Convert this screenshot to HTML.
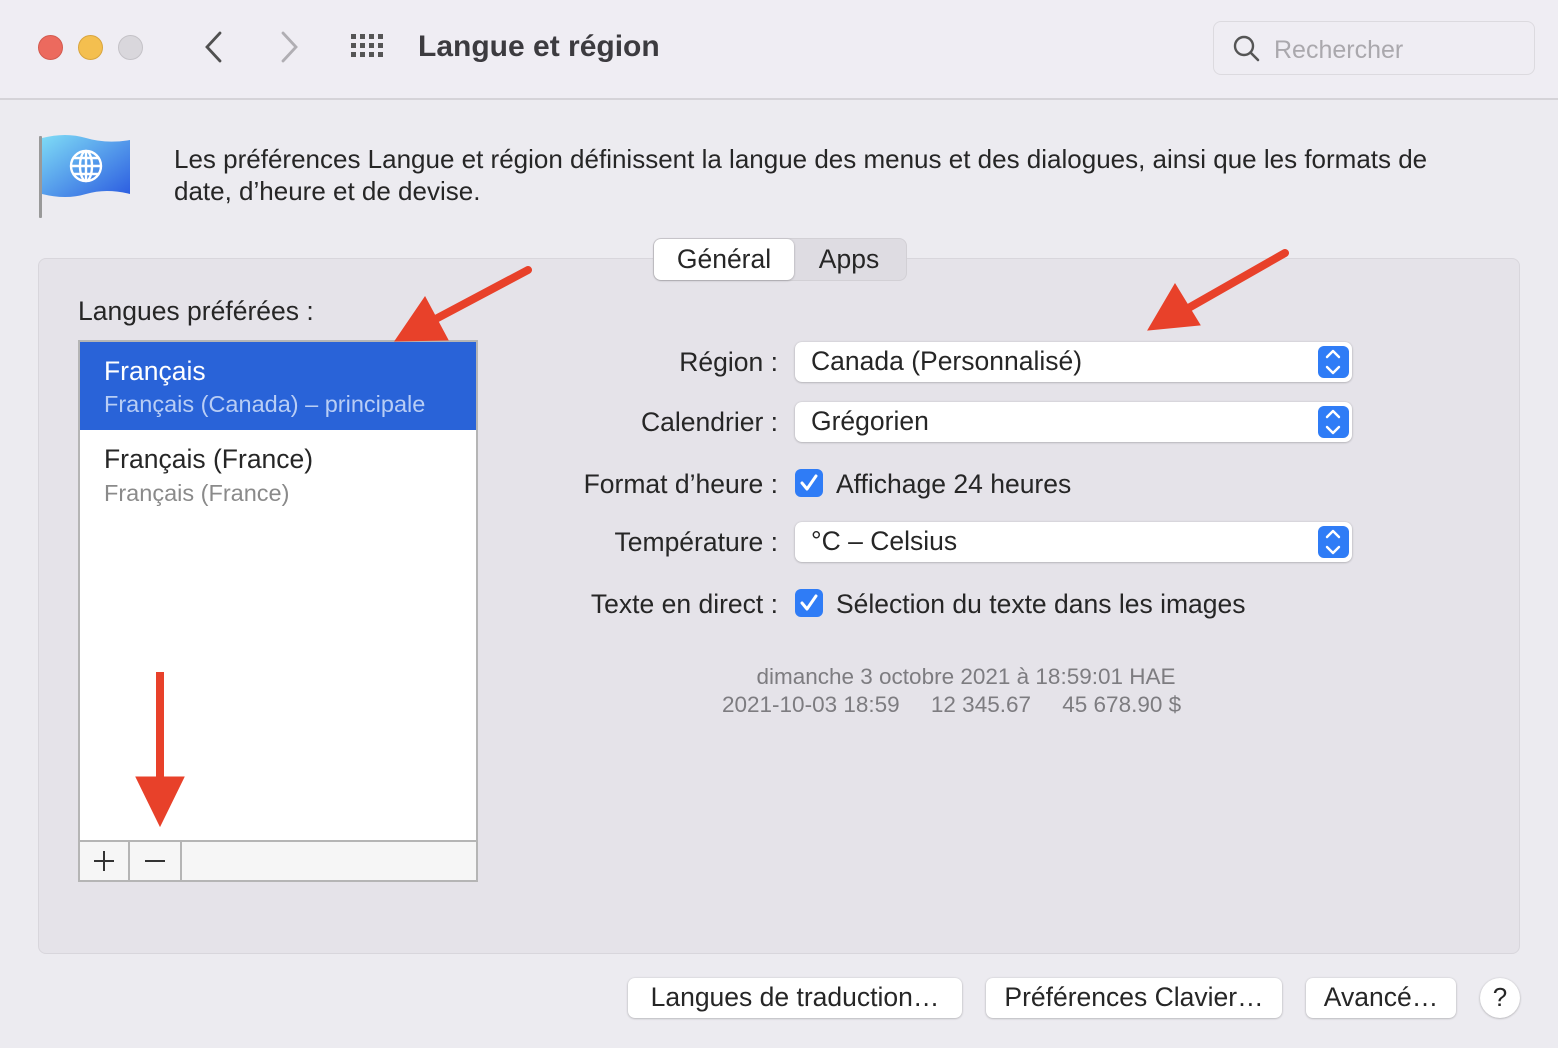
<!DOCTYPE html>
<html><head><meta charset="utf-8"><style>
*{margin:0;padding:0;box-sizing:border-box}
body{width:1558px;height:1048px;background:#ecebf0;font-family:"Liberation Sans",sans-serif;color:#262626;position:relative;overflow:hidden}
.a{position:absolute;white-space:nowrap}
.tb{position:absolute;left:0;top:0;width:1558px;height:100px;background:#efedf3;border-bottom:2px solid #d5d3d8}
.dot{position:absolute;top:35px;width:25px;height:25px;border-radius:50%}
.panel{position:absolute;left:38px;top:258px;width:1482px;height:696px;background:#e5e3e9;border:1px solid #d8d6dc;border-radius:8px}
.pop{position:absolute;left:795px;width:557px;height:40px;background:#fff;border-radius:7px;box-shadow:0 0.5px 2px rgba(0,0,0,.3);font-size:26.5px;padding:4px 0 0 16px}
.pop .s{position:absolute;right:3px;top:4px;width:31px;height:32px;background:#2f7cf6;border-radius:6px}
.lbl{position:absolute;font-size:26.5px;text-align:right;right:780px;white-space:nowrap}
.cb{position:absolute;left:795px;width:28px;height:28px;background:#2f7cf6;border-radius:6px}
.btn{position:absolute;top:978px;height:40px;background:#fff;border-radius:7px;box-shadow:0 0.5px 2px rgba(0,0,0,.3);font-size:26.5px;text-align:center;padding-top:4px}
</style></head><body>
<div class="tb"></div>
<div class="dot" style="left:38px;background:#ec6a5e;border:1px solid #d35a4f"></div>
<div class="dot" style="left:78px;background:#f4bf4f;border:1px solid #d9a53e"></div>
<div class="dot" style="left:118px;background:#d9d7dc;border:1px solid #c4c2c7"></div>
<svg class="a" style="left:200px;top:30px" width="110" height="36"><path d="M20 3 L7 17 L20 31" stroke="#505050" stroke-width="2.8" fill="none" stroke-linecap="round"/><path d="M83 3 L96 17 L83 31" stroke="#b0aeb3" stroke-width="2.8" fill="none" stroke-linecap="round"/></svg>
<svg class="a" style="left:350px;top:33px" width="40" height="30"><g fill="#555"><rect x="1" y="1" width="5" height="5"/><rect x="10" y="1" width="5" height="5"/><rect x="19" y="1" width="5" height="5"/><rect x="28" y="1" width="5" height="5"/><rect x="1" y="10" width="5" height="5"/><rect x="10" y="10" width="5" height="5"/><rect x="19" y="10" width="5" height="5"/><rect x="28" y="10" width="5" height="5"/><rect x="1" y="19" width="5" height="5"/><rect x="10" y="19" width="5" height="5"/><rect x="19" y="19" width="5" height="5"/><rect x="28" y="19" width="5" height="5"/></g></svg>
<div class="a" style="left:418px;top:30px;font-size:30px;font-weight:bold;color:#3c3b3f">Langue et région</div>
<div class="a" style="left:1213px;top:21px;width:322px;height:54px;border:1px solid #dcdadf;border-radius:8px;background:#efedf3"></div>
<svg class="a" style="left:1232px;top:34px" width="30" height="30"><circle cx="12" cy="12" r="9" stroke="#555" stroke-width="2.4" fill="none"/><path d="M18.5 18.5 L26 26" stroke="#555" stroke-width="2.6" stroke-linecap="round"/></svg>
<div class="a" style="left:1274px;top:36px;font-size:25px;color:#aaa8ad">Rechercher</div>

<svg class="a" style="left:36px;top:132px" width="100" height="90"><defs><linearGradient id="g" x1="0" y1="0" x2="1" y2="1"><stop offset="0" stop-color="#7fdcf6"/><stop offset="1" stop-color="#2b5be0"/></linearGradient></defs><rect x="3" y="4" width="3" height="82" fill="#999" rx="1"/><path d="M6 6 Q30 0 50 6 T94 8 L94 62 Q70 56 50 62 T6 62 Z" fill="url(#g)"/><g stroke="#fff" stroke-width="2.4" fill="none"><circle cx="50" cy="34" r="15"/><ellipse cx="50" cy="34" rx="6" ry="15"/><path d="M35 34 H65 M38 26 H62 M38 42 H62 M50 19 V49"/></g></svg>
<div class="a" style="left:174px;top:143px;font-size:26px;line-height:32px;white-space:normal;width:1300px">Les préférences Langue et région définissent la langue des menus et des dialogues, ainsi que les formats de date, d’heure et de devise.</div>

<div class="panel"></div>
<div class="a" style="left:653px;top:238px;width:254px;height:43px;background:#dedce2;border-radius:8px;border:1px solid #d2d0d5"></div>
<div class="a" style="left:654px;top:239px;width:140px;height:41px;background:#fff;border-radius:7px;box-shadow:0 0.5px 2px rgba(0,0,0,.3);font-size:26.5px;text-align:center;padding-top:5px">Général</div>
<div class="a" style="left:794px;top:244px;width:110px;font-size:26.5px;text-align:center">Apps</div>

<div class="a" style="left:78px;top:296px;font-size:26.5px">Langues préférées :</div>
<div class="a" style="left:78px;top:340px;width:400px;height:542px;background:#fff;border:2px solid #b5b5b5"></div>
<div class="a" style="left:80px;top:342px;width:396px;height:88px;background:#2963d8"></div>
<div class="a" style="left:104px;top:356px;font-size:26.5px;color:#fff">Français</div>
<div class="a" style="left:104px;top:391px;font-size:23.5px;color:#b8cdf5">Français (Canada) – principale</div>
<div class="a" style="left:104px;top:444px;font-size:26.5px">Français (France)</div>
<div class="a" style="left:104px;top:480px;font-size:23.5px;color:#8a8a8a">Français (France)</div>
<div class="a" style="left:80px;top:840px;width:396px;height:40px;background:#f6f6f6;border-top:2px solid #b5b5b5"></div>
<div class="a" style="left:128px;top:842px;width:2px;height:38px;background:#b5b5b5"></div>
<div class="a" style="left:180px;top:842px;width:2px;height:38px;background:#b5b5b5"></div>
<svg class="a" style="left:90px;top:848px" width="80" height="26"><path d="M14 3 V23 M4 13 H24" stroke="#333" stroke-width="2"/><path d="M55 13 H75" stroke="#333" stroke-width="2"/></svg>

<div class="lbl" style="top:347px">Région :</div>
<div class="lbl" style="top:407px">Calendrier :</div>
<div class="lbl" style="top:469px">Format d’heure :</div>
<div class="lbl" style="top:527px">Température :</div>
<div class="lbl" style="top:589px">Texte en direct :</div>
<div class="pop" style="top:342px">Canada (Personnalisé)<div class="s"></div></div>
<div class="pop" style="top:402px">Grégorien<div class="s"></div></div>
<div class="pop" style="top:522px">°C – Celsius<div class="s"></div></div>
<svg class="a" style="left:1321px;top:347px" width="24" height="100"><g stroke="#fff" stroke-width="2.4" fill="none" stroke-linecap="round" stroke-linejoin="round"><path d="M6 10 L12 4 L18 10 M6 20 L12 26 L18 20"/><path d="M6 70 L12 64 L18 70 M6 80 L12 86 L18 80"/></g></svg>
<svg class="a" style="left:1321px;top:527px" width="24" height="32"><g stroke="#fff" stroke-width="2.4" fill="none" stroke-linecap="round" stroke-linejoin="round"><path d="M6 10 L12 4 L18 10 M6 20 L12 26 L18 20"/></g></svg>
<div class="cb" style="top:469px"></div>
<div class="cb" style="top:589px"></div>
<svg class="a" style="left:795px;top:469px" width="28" height="150"><g stroke="#fff" stroke-width="3" fill="none" stroke-linecap="round" stroke-linejoin="round"><path d="M7 14 L12 20 L21 7"/><path d="M7 134 L12 140 L21 127"/></g></svg>
<div class="a" style="left:836px;top:469px;font-size:26.5px">Affichage 24 heures</div>
<div class="a" style="left:836px;top:589px;font-size:26.5px">Sélection du texte dans les images</div>
<div class="a" style="left:680px;top:664px;width:572px;text-align:center;font-size:22.5px;color:#7d7c80">dimanche 3 octobre 2021 à 18:59:01 HAE</div>
<div class="a" style="left:722px;top:692px;font-size:22.5px;color:#7d7c80">2021-10-03 18:59&nbsp;&nbsp;&nbsp;&nbsp;&nbsp;12 345.67&nbsp;&nbsp;&nbsp;&nbsp;&nbsp;45 678.90 $</div>

<div class="btn" style="left:628px;width:334px">Langues de traduction…</div>
<div class="btn" style="left:986px;width:296px">Préférences Clavier…</div>
<div class="btn" style="left:1306px;width:150px">Avancé…</div>
<div class="a" style="left:1480px;top:978px;width:40px;height:40px;border-radius:50%;background:#fff;box-shadow:0 0.5px 2px rgba(0,0,0,.3);font-size:26px;text-align:center;padding-top:4px">?</div>

<svg class="a" style="left:0;top:0" width="1558" height="1048"><g fill="#e8412a" stroke="#e8412a"><path d="M528 270 L430 322" stroke-width="8" stroke-linecap="round"/><path d="M395 341 L425 297 L448 340 Z" stroke-width="1"/><path d="M1285 253 L1185 310" stroke-width="8" stroke-linecap="round"/><path d="M1148 330 L1175 284 L1200 325 Z" stroke-width="1"/><path d="M160 672 V785" stroke-width="8"/><path d="M136 777 L184 777 L160 826 Z" stroke-width="1"/></g></svg>
</body></html>
